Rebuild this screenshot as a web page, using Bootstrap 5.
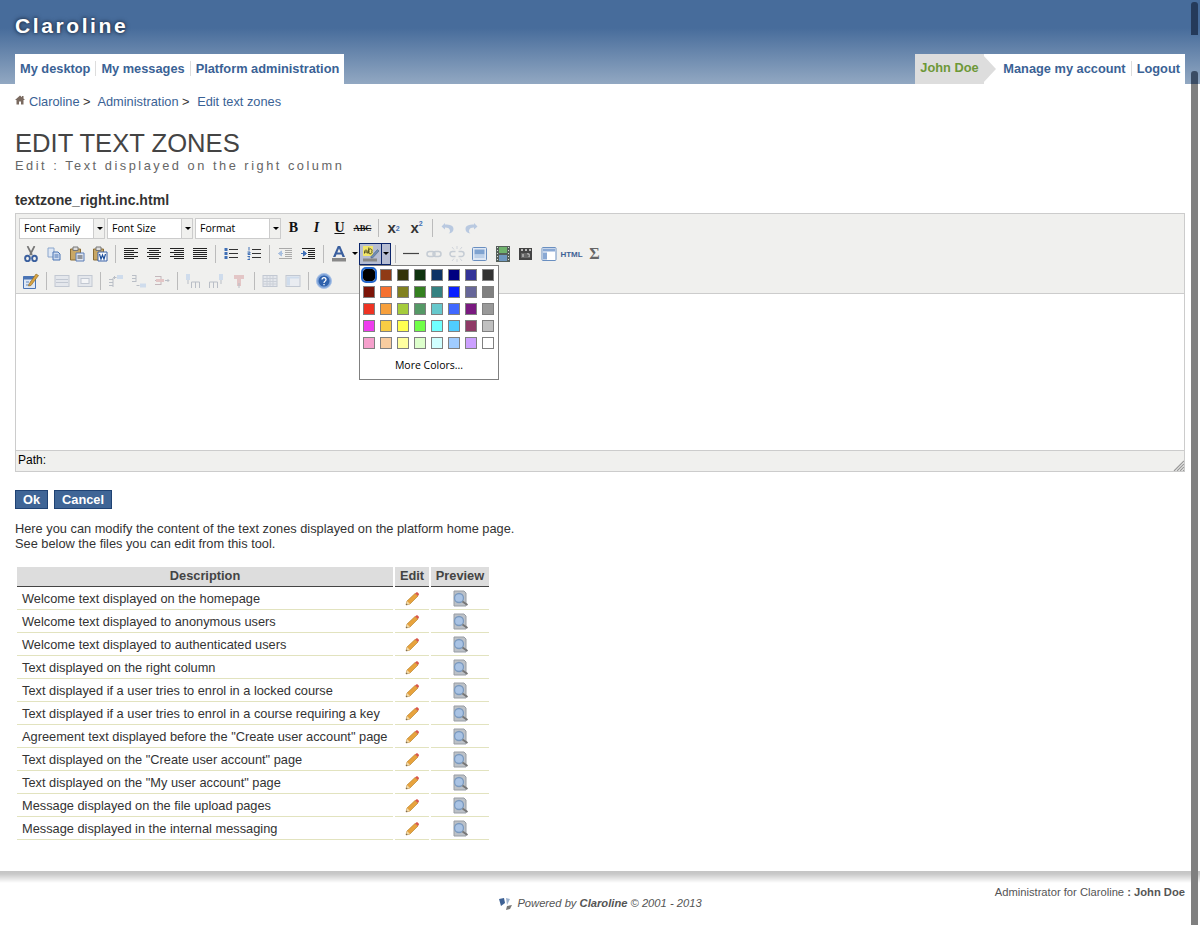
<!DOCTYPE html>
<html lang="en">
<head>
<meta charset="utf-8">
<title>Claroline</title>
<link href="https://cdn.jsdelivr.net/npm/bootstrap@5.3.0/dist/css/bootstrap.min.css" rel="stylesheet">
<style>
html,body{height:925px;overflow:hidden}
body{font-family:"Liberation Sans",Arial,sans-serif;font-size:12.8px;color:#333;background:#fff;position:relative}
a{color:#3a6295;text-decoration:none}
.cl-head{height:84px;background:linear-gradient(#476c9b 0,#476c9b 28px,#92a8c2 84px);padding:0 15px;position:relative}
.cl-logo{height:54px;padding-top:13px;font-size:21px;font-weight:700;letter-spacing:2.6px;color:#fff;line-height:25px;text-shadow:0 0 5px #22324a,0 0 3px #22324a}
.cl-tabs{height:30px;background:#fff;font-size:12.8px;font-weight:700;line-height:15px;padding-bottom:1px}
.cl-tabs a{padding:0 5px;border-left:1px solid #ddd;height:15px}
.cl-tabs a:first-child{border-left:0}
.cl-user{background:#ddd;color:#6d9838;height:30px;width:69px;padding-left:5px;line-height:28px;font-size:12.8px;font-weight:700;position:relative;margin-bottom:-1px}
.cl-user::after{content:"";position:absolute;left:67px;top:0;border-left:14px solid #ddd;border-top:15px solid transparent;border-bottom:15px solid transparent}
.cl-acct{margin-left:14px}
.cl-main{padding:0 15px}
.cl-crumb{height:34px;padding-top:10px;line-height:15px;color:#333}
.cl-crumb .sp{margin-right:4px}
.cl-crumb svg{vertical-align:1px}
.cl-title{font-size:25.6px;font-weight:400;color:#444;margin:0;padding-top:9px;line-height:32px}
.cl-sub{font-size:12.8px;letter-spacing:2.52px;color:#666;line-height:14px;height:14px}
.cl-file{font-size:14.08px;font-weight:700;color:#333;margin-top:18px;line-height:18px;height:22px}
.ed{border:1px solid #ccc;height:259px;background:#f0f0ee;position:relative}
.ed-bar{height:79px;padding-top:1px}
.ed-row{height:26px;display:flex;align-items:center;padding-left:3px}
.ed-row.r2{height:26.5px}
.ed-sel{width:86px;height:21px;margin-right:2px;border:1px solid #ccc;background:#fff;font:10.5px "Open Sans",sans-serif;color:#000;display:flex;line-height:19px}
.ed-sel span{flex:1;padding-left:4px}
.ed-sel i{width:11px;border-left:1px solid #ccc;background:#f0f0ee;position:relative}
.ed-sel i::after,.ed-drop::after{content:"";position:absolute;left:3px;top:8px;border-left:3px solid transparent;border-right:3px solid transparent;border-top:3px solid #000}
.ed-b{width:23px;height:22px;display:flex;align-items:center;justify-content:center;flex:none;position:relative}
.ed-b svg{width:16px;height:16px;display:block}
.ed-sep{width:8px;flex:none;display:flex;justify-content:center}
.ed-sep::after{content:"";width:1px;height:18px;background:#bbb;margin-left:1px}
.ed-drop{width:10px;height:22px;position:relative;flex:none}
.ed-drop::after{left:2px;top:9px}
.ed-sel2{display:flex;height:22px;border:1px solid #0a246a;background:#b6bdd2;margin-left:-1px;flex:none}
.ed-sel2 .ed-b{width:21px;height:20px}
.ed-sel2 .ed-drop{width:9px;height:20px;border-left:1px solid #0a246a}
.ed-sel2 .ed-drop::after{left:1px;top:8px}
.ed-t{font:700 14px "Liberation Serif",serif;color:#111;line-height:16px}
.ed-t1{margin-left:-1px}
.ed-abc{font-size:8.5px}
.ed-xs{font:700 15px "Liberation Sans",sans-serif;color:#333;margin-top:-2px}
.ed-xs sub,.ed-xs sup{font-size:7px;color:#3f6fb5}
.ed-html{font:700 8px "Liberation Sans",sans-serif;color:#3f6295}
.ed-sig{font:700 16px "Liberation Serif",serif;color:#666}
.ed-area{height:158px;background:#fff;border-top:1px solid #ccc;border-bottom:1px solid #ccc}
.ed-path{height:20px;padding:0 0 0 2px;font-size:12px;line-height:18px;color:#000;position:relative}
.ed-grip{position:absolute;right:0;bottom:0;width:11px;height:11px}
.ed-pop{position:absolute;left:343px;top:51px;width:140px;height:115px;background:#fff;border:1px solid #808080;padding:2px 0 0 3px;z-index:5}
.ed-swz{display:grid;grid-template-columns:repeat(8,17px);grid-auto-rows:17px}
.ed-swz b{display:block;width:12px;height:12px;border:1px solid #808080;margin-top:1px}
.ed-swz b.cur{outline:2px solid #2266cc;outline-offset:0;border-radius:3px;border-color:#000}
.ed-more{font:10.5px "Open Sans",sans-serif;color:#000;text-align:center;margin-top:4px;margin-left:-3px;line-height:16px}
.cl-btns{margin-top:18px;gap:6px}
.btn.cl-go{--bs-btn-bg:#3f6596;--bs-btn-border-color:#1f4273;--bs-btn-color:#fff;--bs-btn-hover-bg:#3f6596;--bs-btn-hover-color:#fff;--bs-btn-border-radius:0;font:700 12.8px/17px "Liberation Sans",sans-serif;padding:0 7px;height:19px}
.cl-info{margin:12px 0 0;line-height:15px;color:#333}
.tz{border-collapse:separate;border-spacing:2px;margin:14px 0 0;color:#333}
.tz th{background:#ddd;border-bottom:1px solid #444;height:20px;padding:0 0 2px;text-align:center;font-weight:700;color:#444;line-height:16px}
.tz td{height:21px;border-bottom:1px solid #e2e3bf;padding:0 0 0 5px;line-height:20px}
.tz td.c{padding:0;text-align:center}
.tz svg{display:block;margin:0 auto}
.tz .w1{width:376px}.tz .w2{width:34px}.tz .w3{width:58px}
.cl-foot{position:absolute;left:0;right:0;top:871px;height:54px;background:linear-gradient(#c4c4c4 0,#c9c9c9 3px,#fff 12px);padding:0 15px;font-size:11.2px;color:#555}
.cl-admin{position:absolute;right:15px;top:14px;line-height:14px}
.cl-pow{position:absolute;left:0;right:0;top:25px;text-align:center;font-style:italic;line-height:15px}
.cl-pow svg{vertical-align:-3px;margin-right:4px}
.cl-sb{position:absolute;left:1191px;width:7px;z-index:9}
.sb1{top:2px;height:33px;background:#253a5a;border-radius:3px 3px 0 0}
.sb2{top:71px;height:13px;background:#3b4c64;border-radius:3px 3px 0 0}
.sb3{top:84px;height:841px;background:#808080}
</style>
</head>
<body>
<svg width="0" height="0" class="position-absolute">
<defs>
<symbol id="i-cut" viewBox="0 0 16 16"><path d="M4.500 0l4.500 9M11.500 0L7 9" stroke="#777" stroke-width="1.700" fill="none"/><ellipse cx="4.500" cy="12.500" rx="2.400" ry="2.700" fill="none" stroke="#3a5f9e" stroke-width="1.900"/><ellipse cx="11.500" cy="12.500" rx="2.400" ry="2.700" fill="none" stroke="#3a5f9e" stroke-width="1.900"/></symbol>
<symbol id="i-copy" viewBox="0 0 16 16"><path d="M2 2h6v9H2z" fill="#dfe8f5" stroke="#8ba6cc"/><path d="M7 6h5l2 2v6H7z" fill="#cfdcf0" stroke="#4a74b4"/><path d="M8.500 9h4M8.500 11h4" stroke="#4a74b4"/></symbol>
<symbol id="i-paste" viewBox="0 0 16 16"><path d="M1.500 3h10v11h-10z" fill="#c9a866" stroke="#8a6c34"/><path d="M4 1h5v3.500H4z" fill="#ddd" stroke="#777"/><path d="M7 7h8v8H7z" fill="#dfe6f2" stroke="#5b7db5"/><path d="M8.500 10h5M8.500 12h5" stroke="#444"/></symbol>
<symbol id="i-pastew" viewBox="0 0 16 16"><path d="M1.500 3h10v11h-10z" fill="#c9a866" stroke="#8a6c34"/><path d="M4 1h5v3.500H4z" fill="#ddd" stroke="#777"/><path d="M6 6h9v9H6z" fill="#fff" stroke="#3b62a8"/><path d="M7.500 8l1.500 5 1.500-4 1.500 4 1.500-5" fill="none" stroke="#1d4f9c" stroke-width="1.200"/></symbol>
<symbol id="i-al" viewBox="0 0 16 16"><path d="M1 2.500h14M1 4.500h10M1 6.500h14M1 8.500h10M1 10.500h14M1 12.500h10" stroke="#222"/></symbol>
<symbol id="i-ac" viewBox="0 0 16 16"><path d="M1 2.500h14M3 4.500h10M1 6.500h14M3 8.500h10M1 10.500h14M3 12.500h10" stroke="#222"/></symbol>
<symbol id="i-ar" viewBox="0 0 16 16"><path d="M1 2.500h14M5 4.500h10M1 6.500h14M5 8.500h10M1 10.500h14M5 12.500h10" stroke="#222"/></symbol>
<symbol id="i-aj" viewBox="0 0 16 16"><path d="M1 2.500h14M1 4.500h14M1 6.500h14M1 8.500h14M1 10.500h14M1 12.500h14" stroke="#222"/></symbol>
<symbol id="i-ul" viewBox="0 0 16 16"><path d="M6 3.500h9M6 7.500h9M6 11.500h9" stroke="#333"/><path d="M1.500 2h3v3h-3zM1.500 6h3v3h-3zM1.500 10h3v3h-3z" fill="#3f6fb5"/></symbol>
<symbol id="i-ol" viewBox="0 0 16 16"><path d="M6 3.500h9M6 7.500h9M6 11.500h9" stroke="#333"/><path d="M3 1v3.500M1.500 6h2.500v1.200H2v1.300h2.500M1.500 10.500h2.500M2.500 12h1.500M1.500 13.500h2.500" fill="none" stroke="#3f6fb5"/></symbol>
<symbol id="i-out" viewBox="0 0 16 16"><path d="M2 2.500h13M8 4.500h7M8 6.500h7M8 8.500h7M8 10.500h7M2 12.500h13" stroke="#aaa"/><path d="M1 7.500h5M1.500 7.500l3-2.500v5z" fill="#a8bfe0" stroke="#a8bfe0"/></symbol>
<symbol id="i-ind" viewBox="0 0 16 16"><path d="M2 2.500h13M8 4.500h7M8 6.500h7M8 8.500h7M8 10.500h7M2 12.500h13" stroke="#222"/><path d="M1 7.500h5M6.500 7.500l-3-2.500v5z" fill="#3f6fb5" stroke="#3f6fb5"/></symbol>
<symbol id="i-A" viewBox="0 0 16 16"><path d="M2 11L6.800 0h2.400L14 11h-2.500l-1-2.500H5.500l-1 2.500zM6.300 6.500h3.400L8 2.500z" fill="#3a5f9e"/><path d="M1 12h14v3.500H1z" fill="#888"/></symbol>
<symbol id="i-hl" viewBox="0 0 16 16"><path d="M0 0h10v10H0z" fill="#f1e66a"/><path d="M1.500 7.500c0-3 .5-3.500 1.500-3.500s1.300.5 1.300 3.500M1.500 6h2.800M5.800 1.500v6M5.800 5.300a1.700 1.700 0 1 1 3 0 1.700 1.700 0 1 1-3 0" fill="none" stroke="#4c4a20"/><path d="M8 10.500l6.500-7 1.500 1.500-6.500 7H8z" fill="#6f8fb5" stroke="#4a5f80" stroke-width=".6"/><path d="M0 12.500h14v3H0z" fill="#888"/></symbol>
<symbol id="i-hr" viewBox="0 0 16 16"><path d="M0 7.500h16" stroke="#444" stroke-width="1.200"/></symbol>
<symbol id="i-link" viewBox="0 0 16 16"><rect x="1" y="5.500" width="8" height="5" rx="2.500" fill="none" stroke="#c5ccd4" stroke-width="1.500"/><rect x="7" y="5.500" width="8" height="5" rx="2.500" fill="none" stroke="#c5ccd4" stroke-width="1.500"/></symbol>
<symbol id="i-unlink" viewBox="0 0 16 16"><path d="M6.500 5.500H3.500a2.500 2.500 0 0 0 0 5h3M9.500 5.500h3a2.500 2.500 0 0 1 0 5h-3" fill="none" stroke="#c5ccd4" stroke-width="1.500"/><path d="M8 0v3M8 13v3M3 1l2 2.500M13 1l-2 2.500M3 15l2-2.500M13 15l-2-2.500" stroke="#d0d4da"/></symbol>
<symbol id="i-img" viewBox="0 0 16 16"><rect x=".5" y="1.500" width="14" height="13" rx="1" fill="#dfe8f4" stroke="#6a8fc0"/><path d="M2.500 3.500h10v5h-10z" fill="#7fa3d0"/><path d="M2.500 8.500h10v3.500h-10z" fill="#bcd0e8"/></symbol>
<symbol id="i-film" viewBox="0 0 16 16"><path d="M1 0h14v16H1z" fill="#55605a"/><path d="M4 1h8v6H4z" fill="#6fb36c"/><path d="M4 9h8v6H4z" fill="#6f98c0"/><path d="M2 1h1v1H2zM2 4h1v1H2zM2 7h1v1H2zM2 10h1v1H2zM2 13h1v1H2zM13 1h1v1h-1zM13 4h1v1h-1zM13 7h1v1h-1zM13 10h1v1h-1zM13 13h1v1h-1z" fill="#ddd"/></symbol>
<symbol id="i-clap" viewBox="0 0 16 16"><path d="M1 2h13v12H1z" fill="#444"/><path d="M3 3h2v2H3zM7 3h2v2H7zM11 3h2v2h-2z" fill="#bbb"/><path d="M3 7h9v5H3z" fill="#666"/><path d="M5 8v3M9 8h2v3" stroke="#ddd"/></symbol>
<symbol id="i-tpl" viewBox="0 0 16 16"><rect x="1" y="1.500" width="14" height="13" rx="1" fill="#fff" stroke="#6a8fc0"/><path d="M2 2.500h12v3H2z" fill="#8aa9d4"/><path d="M2 6.500h4v7H2z" fill="#8aa9d4"/></symbol>
<symbol id="i-edit" viewBox="0 0 16 16"><path d="M.5 3.500h12v12H.5z" fill="#dfe8f4" stroke="#4a74b4"/><path d="M.5 3.500h12v3H.5z" fill="#4a74b4"/><path d="M3 8h3v2H3zM7 8h3v2H7zM3 11h3v2H3z" fill="#9fb8da"/><path d="M6 11L13 1l2.500 1.500L8 12.500l-2.500.5z" fill="#d9a441" stroke="#8a6423" stroke-width=".6"/></symbol>
<symbol id="i-row1" viewBox="0 0 16 16"><rect x="1" y="2.500" width="14" height="11" fill="#e4e7ec" stroke="#c2c8d2"/><path d="M2 6.500h12M2 9.500h12" stroke="#c2c8d2"/></symbol>
<symbol id="i-row2" viewBox="0 0 16 16"><rect x="1" y="2.500" width="14" height="11" fill="#e4e7ec" stroke="#c2c8d2"/><rect x="4" y="5.500" width="8" height="5" fill="#f4f5f7" stroke="#c2c8d2"/></symbol>
<symbol id="i-ins1" viewBox="0 0 16 16"><path d="M1 6.500h4M1 9.500h4M1 12.500h4M5 5v9" stroke="#b9bec6" fill="none"/><path d="M5.500 4.500h3M7 3l-1.500 1.500L7 6" stroke="#b9bec6" fill="none"/><rect x="9" y="2" width="6" height="4" fill="#cfdcec"/></symbol>
<symbol id="i-ins2" viewBox="0 0 16 16"><path d="M1 2.500h4M1 5.500h4M1 8.500h4M5 2v7" stroke="#b9bec6" fill="none"/><path d="M5.500 12.500h3" stroke="#b9bec6"/><rect x="9" y="10.500" width="6" height="4" fill="#cfdcec"/></symbol>
<symbol id="i-ins3" viewBox="0 0 16 16"><path d="M1 3.500h6M1 7.500h6M1 11.500h6M7 3v9" stroke="#c4b8bc" fill="none"/><rect x="2" y="6" width="8" height="3" fill="#e3c6c6"/><path d="M11 7.500h4M13.500 6l1.500 1.500L13.500 9" stroke="#b9bec6" fill="none"/></symbol>
<symbol id="i-col1" viewBox="0 0 16 16"><path d="M6.500 9h8M6.500 9v6M10.500 9v6M14.500 9v6" stroke="#b9bec6" fill="none"/><rect x="1" y="1" width="4" height="6" fill="#cfdcec"/><path d="M3 7v4" stroke="#b9bec6"/></symbol>
<symbol id="i-col2" viewBox="0 0 16 16"><path d="M1.500 9h8M1.500 9v6M5.500 9v6M9.500 9v6" stroke="#b9bec6" fill="none"/><rect x="11" y="1" width="4" height="6" fill="#cfdcec"/><path d="M13 7v4" stroke="#b9bec6"/></symbol>
<symbol id="i-col3" viewBox="0 0 16 16"><path d="M3 2h10v4H3z" fill="#e3c6c6"/><path d="M6 6v7h4V6" fill="#e3c6c6"/><path d="M8 10v5" stroke="#b9bec6"/></symbol>
<symbol id="i-t1" viewBox="0 0 16 16"><rect x="1" y="2.500" width="14" height="11" fill="#e4e7ec" stroke="#c2c8d2"/><path d="M1 5.500h14M1 8.500h14M1 11h14M5 3v10M8 3v10M11 3v10" stroke="#cbd0d8"/></symbol>
<symbol id="i-t2" viewBox="0 0 16 16"><rect x="1" y="2.500" width="14" height="11" fill="#e9ecf1" stroke="#c2c8d2"/><path d="M2 3.500h12v2H2zM2 5.500h3v7H2z" fill="#cfdcec"/></symbol>
<symbol id="i-help" viewBox="0 0 16 16"><circle cx="8" cy="8" r="7.500" fill="#7ea3d8" stroke="#a9c2e6"/><circle cx="8" cy="8" r="5.500" fill="#2f62ad"/><path d="M6 6.500a2 2 0 1 1 3 1.800c-.7.400-1 .8-1 1.700M8 11v1.200" fill="none" stroke="#fff" stroke-width="1.300"/></symbol>
<symbol id="i-undo" viewBox="0 0 16 16"><path d="M5 3L1.500 6.500 5 9.500V7.500c3 0 5 1 5 3.500 0 1-.5 2-1.500 2.500 3.500-.3 5-2.500 5-4.500 0-3.500-3.500-4.500-8.500-4.500z" fill="#b9c9e0"/></symbol>
<symbol id="i-redo" viewBox="0 0 16 16"><path d="M11 3l3.500 3.500L11 9.500V7.500c-3 0-5 1-5 3.500 0 1 .5 2 1.500 2.500-3.500-.3-5-2.500-5-4.500 0-3.500 3.500-4.500 8.500-4.500z" fill="#b9c9e0"/></symbol>
<symbol id="i-pen" viewBox="0 0 16 16"><path d="M2 14l1-4L11 2.500l3 2.500-8 8z" fill="#e8a33d" stroke="#b07a22" stroke-width=".6"/><path d="M11 2.500l1.200-1c.5-.4 1-.4 1.500 0l1 1c.4.500.4 1 0 1.500L14 5z" fill="#d9574a"/><path d="M2 14l1-4 3 3z" fill="#f1d9a8"/><path d="M2 14l.5-1.600 1.100 1.100z" fill="#444"/></symbol>
<symbol id="i-prev" viewBox="0 0 18 18"><path d="M3 1h10l2 2v13H3z" fill="#bcc1c7" stroke="#989da3"/><circle cx="8" cy="8" r="4.500" fill="#a9c3e4" stroke="#7b9abf" stroke-width="1.300"/><path d="M11.500 11.500l5 3.500" stroke="#777" stroke-width="2"/></symbol>
<symbol id="i-home" viewBox="0 0 10 10"><path d="M5 .5L0 5h1.500v4.500h2.500V6.500h2v3h2.500V5H10L8.500 3.600V1h-1.500v1.200z" fill="#7a6a60"/></symbol>
</defs>
</svg>

<header class="cl-head">
  <div class="cl-logo">Claroline</div>
  <div class="d-flex justify-content-between">
    <div class="cl-tabs d-flex align-items-center">
      <a href="#">My desktop</a><a href="#">My messages</a><a href="#">Platform administration</a>
    </div>
    <div class="d-flex cl-tabs align-items-center">
      <div class="cl-user">John Doe</div>
      <div class="d-flex cl-acct"><a href="#">Manage my account</a><a href="#">Logout</a></div>
    </div>
  </div>
</header>

<main class="cl-main">
  <div class="cl-crumb"><svg width="10" height="10" class="me-1"><use href="#i-home"/></svg><a href="#">Claroline</a> <span class="sp">&gt;</span> <a href="#">Administration</a> <span class="sp">&gt;</span> <a href="#">Edit text zones</a></div>
  <h1 class="cl-title">EDIT TEXT ZONES</h1>
  <div class="cl-sub">Edit : Text displayed on the right column</div>
  <div class="cl-file">textzone_right.inc.html</div>

  <div class="ed">
    <div class="ed-bar">
      <div class="ed-row">
        <div class="ed-sel"><span>Font Family</span><i></i></div>
        <div class="ed-sel"><span>Font Size</span><i></i></div>
        <div class="ed-sel"><span>Format</span><i></i></div>
        <div class="ed-b ed-t ed-t1">B</div>
        <div class="ed-b ed-t fst-italic">I</div>
        <div class="ed-b ed-t text-decoration-underline">U</div>
        <div class="ed-b ed-t ed-abc text-decoration-line-through">ABC</div>
        <div class="ed-sep"></div>
        <div class="ed-b ed-xs">x<sub>2</sub></div>
        <div class="ed-b ed-xs">x<sup>2</sup></div>
        <div class="ed-sep"></div>
        <div class="ed-b"><svg><use href="#i-undo"/></svg></div>
        <div class="ed-b"><svg><use href="#i-redo"/></svg></div>
      </div>
      <div class="ed-row r2">
        <div class="ed-b"><svg><use href="#i-cut"/></svg></div>
        <div class="ed-b"><svg><use href="#i-copy"/></svg></div>
        <div class="ed-b"><svg><use href="#i-paste"/></svg></div>
        <div class="ed-b"><svg><use href="#i-pastew"/></svg></div>
        <div class="ed-sep"></div>
        <div class="ed-b"><svg><use href="#i-al"/></svg></div>
        <div class="ed-b"><svg><use href="#i-ac"/></svg></div>
        <div class="ed-b"><svg><use href="#i-ar"/></svg></div>
        <div class="ed-b"><svg><use href="#i-aj"/></svg></div>
        <div class="ed-sep"></div>
        <div class="ed-b"><svg><use href="#i-ul"/></svg></div>
        <div class="ed-b"><svg><use href="#i-ol"/></svg></div>
        <div class="ed-sep"></div>
        <div class="ed-b"><svg><use href="#i-out"/></svg></div>
        <div class="ed-b"><svg><use href="#i-ind"/></svg></div>
        <div class="ed-sep"></div>
        <div class="ed-b"><svg><use href="#i-A"/></svg></div>
        <div class="ed-drop"></div>
        <div class="ed-sel2"><div class="ed-b"><svg><use href="#i-hl"/></svg></div><div class="ed-drop"></div></div>
        <div class="ed-sep"></div>
        <div class="ed-b"><svg><use href="#i-hr"/></svg></div>
        <div class="ed-b"><svg><use href="#i-link"/></svg></div>
        <div class="ed-b"><svg><use href="#i-unlink"/></svg></div>
        <div class="ed-b"><svg><use href="#i-img"/></svg></div>
        <div class="ed-b"><svg><use href="#i-film"/></svg></div>
        <div class="ed-b"><svg><use href="#i-clap"/></svg></div>
        <div class="ed-b"><svg><use href="#i-tpl"/></svg></div>
        <div class="ed-b ed-html">HTML</div>
        <div class="ed-b ed-sig">&Sigma;</div>
      </div>
      <div class="ed-row">
        <div class="ed-b"><svg><use href="#i-edit"/></svg></div>
        <div class="ed-sep"></div>
        <div class="ed-b"><svg><use href="#i-row1"/></svg></div>
        <div class="ed-b"><svg><use href="#i-row2"/></svg></div>
        <div class="ed-sep"></div>
        <div class="ed-b"><svg><use href="#i-ins1"/></svg></div>
        <div class="ed-b"><svg><use href="#i-ins2"/></svg></div>
        <div class="ed-b"><svg><use href="#i-ins3"/></svg></div>
        <div class="ed-sep"></div>
        <div class="ed-b"><svg><use href="#i-col1"/></svg></div>
        <div class="ed-b"><svg><use href="#i-col2"/></svg></div>
        <div class="ed-b"><svg><use href="#i-col3"/></svg></div>
        <div class="ed-sep"></div>
        <div class="ed-b"><svg><use href="#i-t1"/></svg></div>
        <div class="ed-b"><svg><use href="#i-t2"/></svg></div>
        <div class="ed-sep"></div>
        <div class="ed-b"><svg><use href="#i-help"/></svg></div>
      </div>
    </div>
    <div class="ed-area"></div>
    <div class="ed-path">Path:
      <svg class="ed-grip" viewBox="0 0 11 11"><path d="M1 11L11 1M4 11l7-7M7 11l4-4M10 11l1-1" stroke="#999" stroke-width="1.200"/></svg>
    </div>
    <div class="ed-pop">
      <div class="ed-swz">
        <b class="cur" style="background:#000"></b><b style="background:#8f3a16"></b><b style="background:#333308"></b><b style="background:#0f330f"></b><b style="background:#0d3366"></b><b style="background:#000080"></b><b style="background:#333399"></b><b style="background:#333"></b>
        <b style="background:#7c1408"></b><b style="background:#f57030"></b><b style="background:#808020"></b><b style="background:#348020"></b><b style="background:#348080"></b><b style="background:#0a20ff"></b><b style="background:#666699"></b><b style="background:#808080"></b>
        <b style="background:#ee3322"></b><b style="background:#f7a03c"></b><b style="background:#a5cc3c"></b><b style="background:#559966"></b><b style="background:#66c8cc"></b><b style="background:#4068ff"></b><b style="background:#7a1a80"></b><b style="background:#999"></b>
        <b style="background:#ee3cee"></b><b style="background:#f8cc44"></b><b style="background:#ffff50"></b><b style="background:#70ff48"></b><b style="background:#70ffff"></b><b style="background:#50ccff"></b><b style="background:#8f3a66"></b><b style="background:#c0c0c0"></b>
        <b style="background:#f5a0cc"></b><b style="background:#f8cc9f"></b><b style="background:#ffffa0"></b><b style="background:#ddffcc"></b><b style="background:#d0ffff"></b><b style="background:#a0ccff"></b><b style="background:#cca0ff"></b><b style="background:#fff"></b>
      </div>
      <div class="ed-more">More Colors...</div>
    </div>
  </div>

  <div class="d-flex cl-btns">
    <button class="btn cl-go">Ok</button>
    <button class="btn cl-go">Cancel</button>
  </div>
  <p class="cl-info">Here you can modify the content of the text zones displayed on the platform home page.<br>See below the files you can edit from this tool.</p>

  <table class="tz">
    <thead><tr><th class="w1">Description</th><th class="w2">Edit</th><th class="w3">Preview</th></tr></thead>
    <tbody>
      <tr><td>Welcome text displayed on the homepage</td><td class="c"><svg width="16" height="16"><use href="#i-pen"/></svg></td><td class="c"><svg width="18" height="18"><use href="#i-prev"/></svg></td></tr>
      <tr><td>Welcome text displayed to anonymous users</td><td class="c"><svg width="16" height="16"><use href="#i-pen"/></svg></td><td class="c"><svg width="18" height="18"><use href="#i-prev"/></svg></td></tr>
      <tr><td>Welcome text displayed to authenticated users</td><td class="c"><svg width="16" height="16"><use href="#i-pen"/></svg></td><td class="c"><svg width="18" height="18"><use href="#i-prev"/></svg></td></tr>
      <tr><td>Text displayed on the right column</td><td class="c"><svg width="16" height="16"><use href="#i-pen"/></svg></td><td class="c"><svg width="18" height="18"><use href="#i-prev"/></svg></td></tr>
      <tr><td>Text displayed if a user tries to enrol in a locked course</td><td class="c"><svg width="16" height="16"><use href="#i-pen"/></svg></td><td class="c"><svg width="18" height="18"><use href="#i-prev"/></svg></td></tr>
      <tr><td>Text displayed if a user tries to enrol in a course requiring a key</td><td class="c"><svg width="16" height="16"><use href="#i-pen"/></svg></td><td class="c"><svg width="18" height="18"><use href="#i-prev"/></svg></td></tr>
      <tr><td>Agreement text displayed before the "Create user account" page</td><td class="c"><svg width="16" height="16"><use href="#i-pen"/></svg></td><td class="c"><svg width="18" height="18"><use href="#i-prev"/></svg></td></tr>
      <tr><td>Text displayed on the "Create user account" page</td><td class="c"><svg width="16" height="16"><use href="#i-pen"/></svg></td><td class="c"><svg width="18" height="18"><use href="#i-prev"/></svg></td></tr>
      <tr><td>Text displayed on the "My user account" page</td><td class="c"><svg width="16" height="16"><use href="#i-pen"/></svg></td><td class="c"><svg width="18" height="18"><use href="#i-prev"/></svg></td></tr>
      <tr><td>Message displayed on the file upload pages</td><td class="c"><svg width="16" height="16"><use href="#i-pen"/></svg></td><td class="c"><svg width="18" height="18"><use href="#i-prev"/></svg></td></tr>
      <tr><td>Message displayed in the internal messaging</td><td class="c"><svg width="16" height="16"><use href="#i-pen"/></svg></td><td class="c"><svg width="18" height="18"><use href="#i-prev"/></svg></td></tr>
    </tbody>
  </table>
</main>

<footer class="cl-foot">
  <div class="cl-admin">Administrator for Claroline <b>: John Doe</b></div>
  <div class="cl-pow"><svg width="15" height="13" viewBox="0 0 15 13"><path d="M1 2l5-1 1 5-4 3z" fill="#3f6295"/><path d="M8 1l4 1-3 6z" fill="#9fb4cf"/><path d="M9 9l5-1-2 4-4 1z" fill="#777"/></svg>Powered by <b>Claroline</b> &copy; 2001 - 2013</div>
</footer>

<div class="cl-sb sb1"></div><div class="cl-sb sb2"></div><div class="cl-sb sb3"></div>
<script src="https://cdn.jsdelivr.net/npm/bootstrap@5.3.0/dist/js/bootstrap.bundle.min.js"></script>
</body>
</html>
